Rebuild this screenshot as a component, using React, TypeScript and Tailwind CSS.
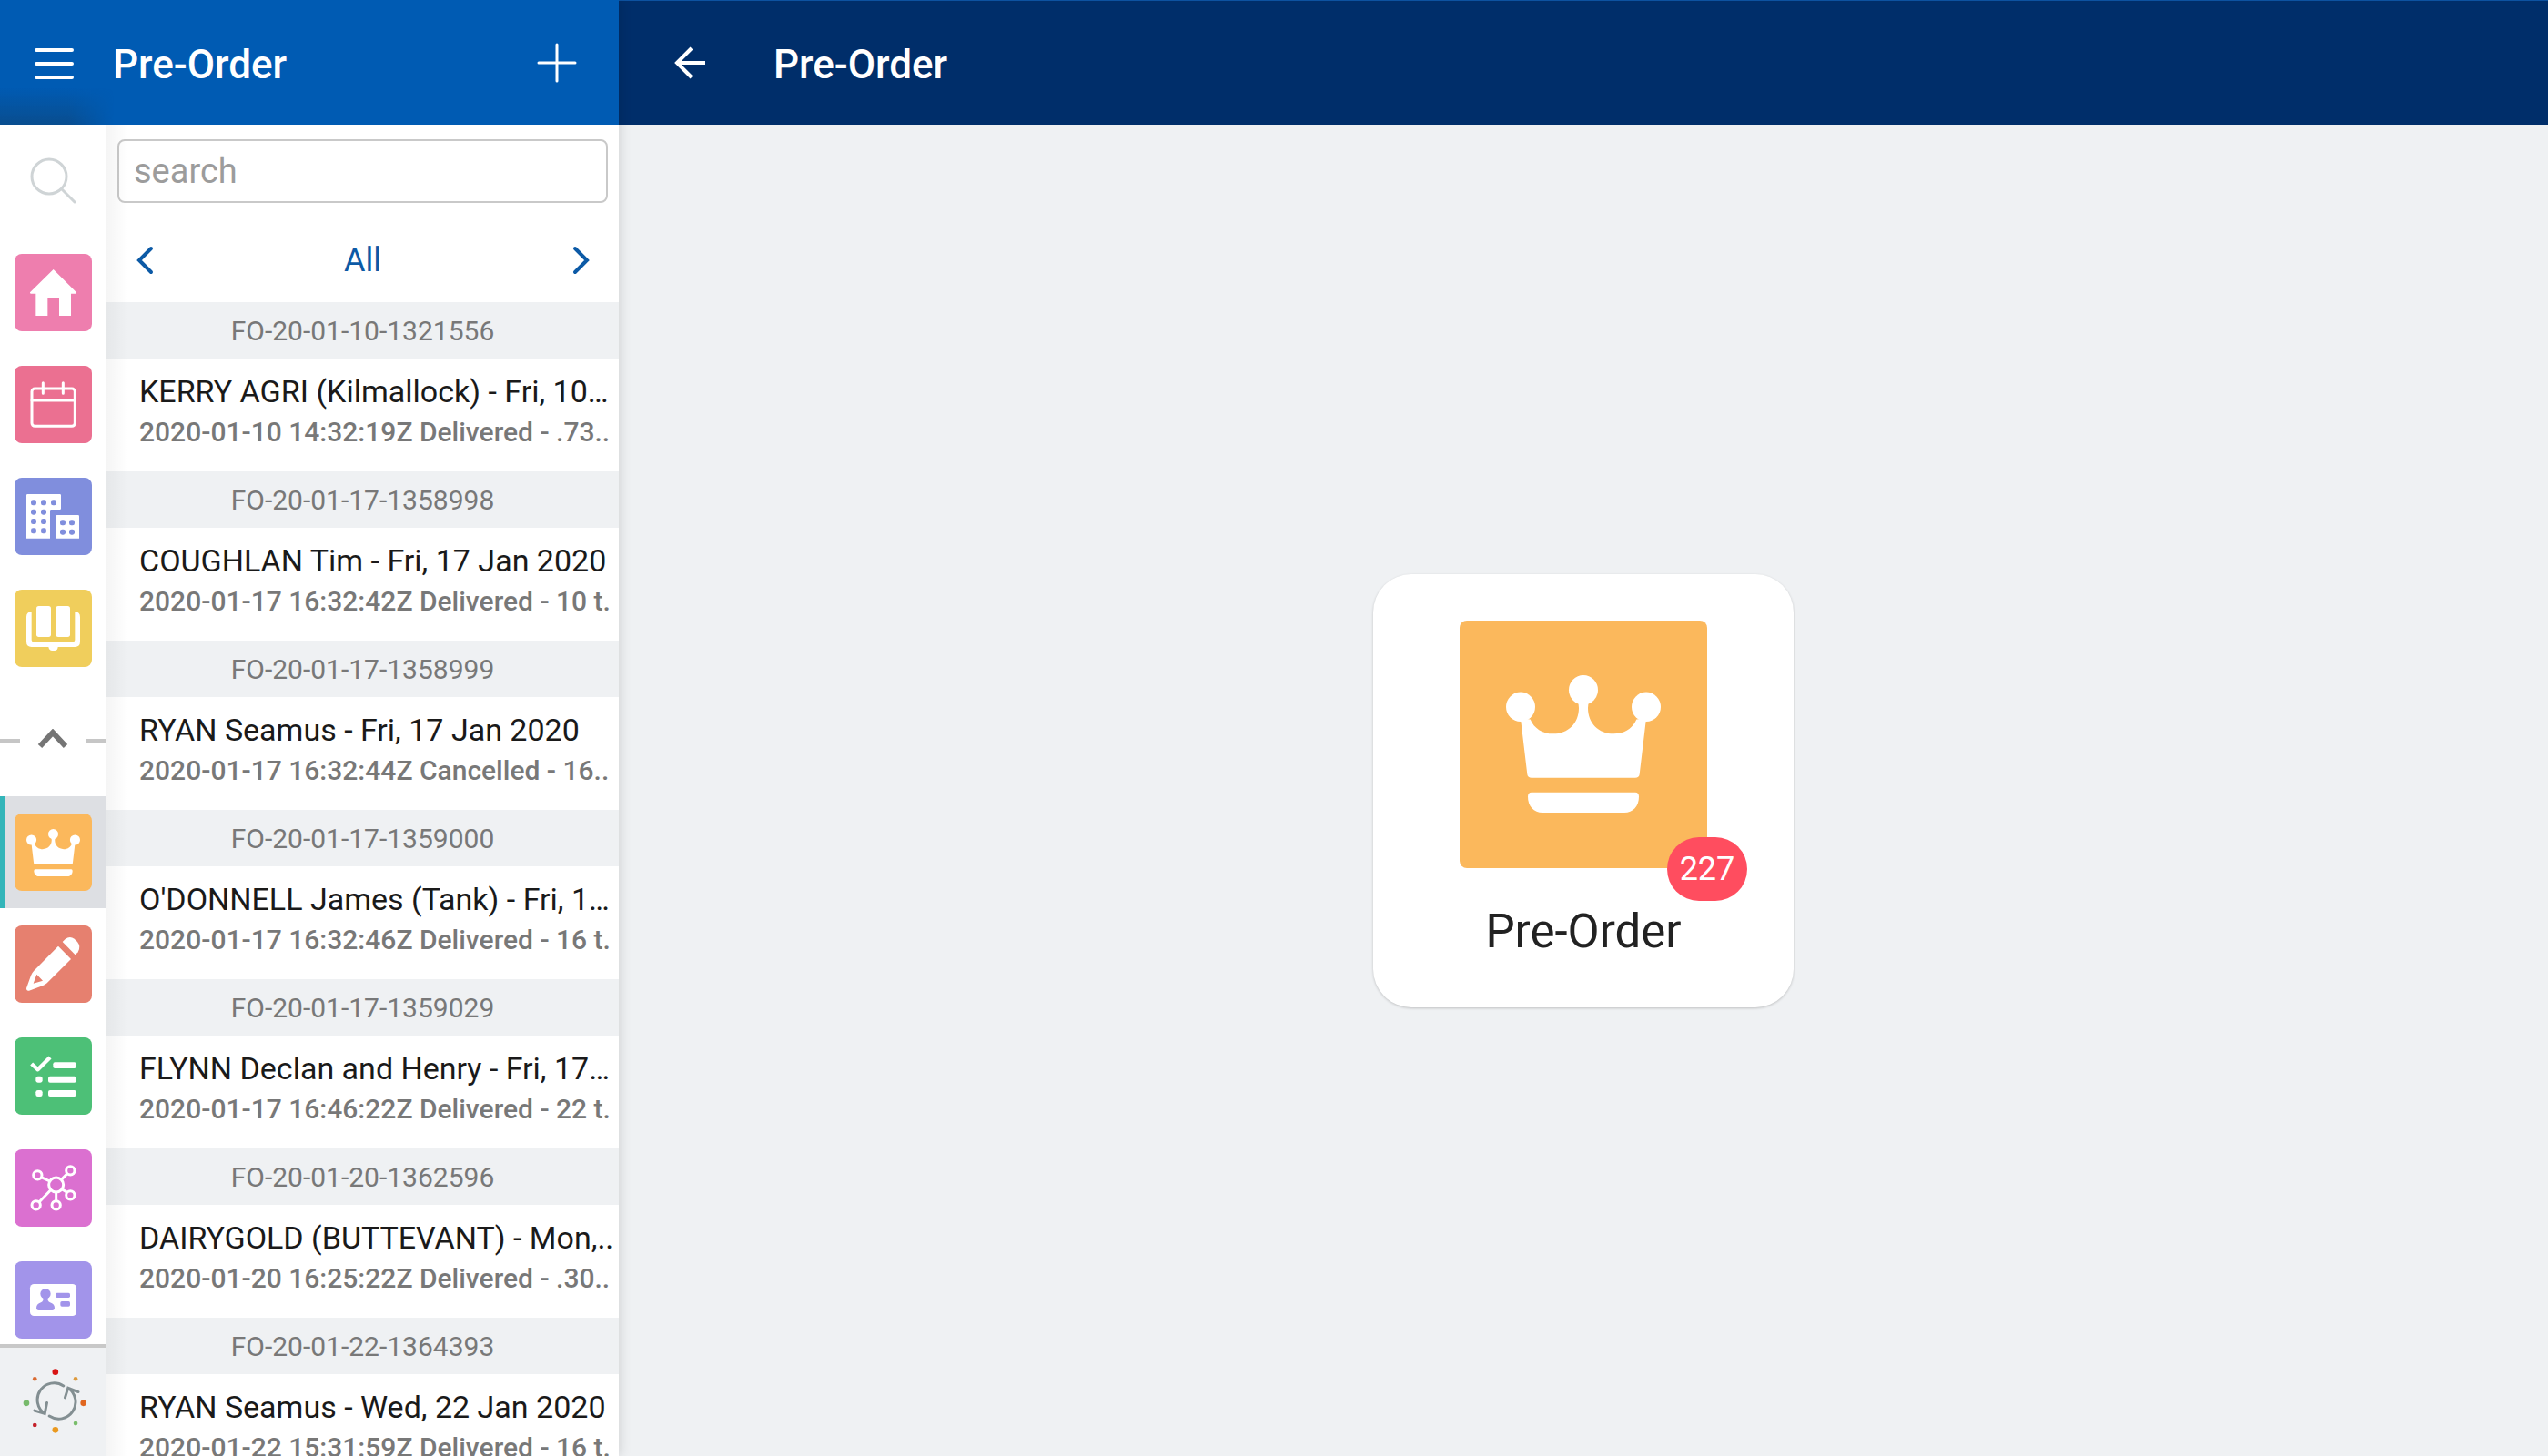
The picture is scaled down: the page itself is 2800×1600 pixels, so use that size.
import type { ReactNode } from "react";

type Order = { ref: string; title: string; detail: string };

const orders: Order[] = [
  { ref: "FO-20-01-10-1321556", title: "KERRY AGRI (Kilmallock) - Fri, 10…", detail: "2020-01-10 14:32:19Z Delivered - .73.." },
  { ref: "FO-20-01-17-1358998", title: "COUGHLAN Tim - Fri, 17 Jan 2020", detail: "2020-01-17 16:32:42Z Delivered - 10 t." },
  { ref: "FO-20-01-17-1358999", title: "RYAN Seamus - Fri, 17 Jan 2020", detail: "2020-01-17 16:32:44Z Cancelled - 16.." },
  { ref: "FO-20-01-17-1359000", title: "O'DONNELL James (Tank) - Fri, 1…", detail: "2020-01-17 16:32:46Z Delivered - 16 t." },
  { ref: "FO-20-01-17-1359029", title: "FLYNN Declan and Henry - Fri, 17…", detail: "2020-01-17 16:46:22Z Delivered - 22 t." },
  { ref: "FO-20-01-20-1362596", title: "DAIRYGOLD (BUTTEVANT) - Mon,..", detail: "2020-01-20 16:25:22Z Delivered - .30.." },
  { ref: "FO-20-01-22-1364393", title: "RYAN Seamus - Wed, 22 Jan 2020", detail: "2020-01-22 15:31:59Z Delivered - 16 t." },
];

function Crown({ className }: { className: string }) {
  return (
    <svg viewBox="0 0 510 446" preserveAspectRatio="none" className={className} fill="#fff" aria-hidden="true">
      <circle cx="48" cy="103" r="48" />
      <circle cx="255" cy="48" r="48" />
      <circle cx="462" cy="103" r="48" />
      <path d="M48 140 L70 322 Q72 333 84 333 H426 Q438 333 440 322 L462 140 L430 143 C418 172 390 190 355 190 C305 190 270 155 270 106 L272 85 H238 L240 106 C240 155 205 190 155 190 C120 190 92 172 80 143 Z" />
      <path d="M84 380 H426 Q438 380 438 394 C438 425 418 446 390 446 H120 C92 446 72 425 72 394 Q72 380 84 380 Z" />
    </svg>
  );
}

function Glyph({ children }: { children: ReactNode }) {
  return (
    <svg viewBox="0 0 255 255" className="size-full" fill="#fff" aria-hidden="true">
      {children}
    </svg>
  );
}

function NavItem({ label, tile, selected, children }: { label: string; tile: string; selected?: boolean; children: ReactNode }) {
  return (
    <button
      type="button"
      aria-label={label}
      className={`flex h-[123px] w-full shrink-0 items-center justify-center ${selected ? "border-l-6 border-[#33b5b9] bg-[#dddfe3] pr-[6px]" : ""}`}
    >
      <span className={`flex size-[85px] items-center justify-center rounded-lg ${tile}`}>{children}</span>
    </button>
  );
}

function Rail() {
  return (
    <nav aria-label="Modules" className="flex w-[117px] shrink-0 flex-col bg-white">
      <div className="flex min-h-0 flex-1 flex-col overflow-hidden">
        <button type="button" aria-label="Search" className="flex h-[123px] shrink-0 items-center justify-center">
          <svg viewBox="0 0 52 52" className="size-[52px]" fill="none" stroke="#cfd4d6" strokeWidth="3" strokeLinecap="round">
            <circle cx="21" cy="21" r="19" />
            <path d="M35 35 L49 49" />
          </svg>
        </button>
        <NavItem label="Home" tile="bg-[#ee7eae]">
          <Glyph>
            <path d="M128 51 L204 127 Q205 131 202 131 H186 V204 H147 V147 H109 V204 H70 V131 H54 Q50 131 51 127 Z" />
          </Glyph>
        </NavItem>
        <NavItem label="Calendar" tile="bg-[#eb7091]">
          <Glyph>
            <g fill="none" stroke="#fff" strokeWidth="9" strokeLinecap="round">
              <rect x="57" y="75" width="142" height="124" rx="10" />
              <path d="M57 114 H199 M94 56 V91 M160 56 V91" />
            </g>
          </Glyph>
        </NavItem>
        <NavItem label="Companies" tile="bg-[#808edd]">
          <Glyph>
            <path d="M43 54 H149 Q153 54 153 58 V101 Q153 105 149 105 H121 Q117 105 117 109 V200 H39 V58 Q39 54 43 54 Z" />
            <path d="M140 123 H209 Q213 123 213 127 V200 H136 V127 Q136 123 140 123 Z" />
            <g fill="#808edd">
              {[82, 113, 144, 175].map((y) => (
                <g key={y}>
                  <rect x="54" y={y - 9} width="18" height="18" rx="7" />
                  <rect x="87" y={y - 9} width="18" height="18" rx="7" />
                </g>
              ))}
              <rect x="120" y="73" width="18" height="18" rx="7" />
              <rect x="150" y="139" width="18" height="18" rx="7" />
              <rect x="180" y="139" width="18" height="18" rx="7" />
              <rect x="150" y="170" width="18" height="18" rx="7" />
              <rect x="180" y="170" width="18" height="18" rx="7" />
            </g>
          </Glyph>
        </NavItem>
        <NavItem label="Catalogue" tile="bg-[#f0ce5c]">
          <Glyph>
            <rect x="72" y="54" width="48" height="102" rx="8" />
            <rect x="136" y="54" width="47" height="102" rx="8" />
            <path d="M56 72 Q39 74 39 90 V172 Q39 189 56 189 H112 Q114 201 124 201 H132 Q142 201 143 189 H199 Q216 189 216 172 V90 Q216 74 199 72 V164 Q199 172 191 172 H64 Q56 172 56 164 Z" />
          </Glyph>
        </NavItem>
        <button type="button" aria-label="Collapse" className="flex h-[123px] shrink-0 items-center justify-between">
          <span className="h-1 w-[22px] bg-[#c6c6c6]" />
          <svg viewBox="0 0 34 26" className="h-[26px] w-[34px]" fill="none" stroke="#757575" strokeWidth="6">
            <path d="M3 19 L17 4 L31 19" />
          </svg>
          <span className="h-1 w-[23px] bg-[#c6c6c6]" />
        </button>
        <NavItem label="Pre-Order" tile="bg-[#fbb85c]" selected>
          <Crown className="h-[52px] w-[59px]" />
        </NavItem>
        <NavItem label="Notes" tile="bg-[#e6806f]">
          <Glyph>
            <path
              fillRule="evenodd"
              d="M144 68 L186 111 L107 190 Q100 196 92 199 L48 215 Q39 217 39 207 L54 165 Q57 156 64 149 Z M73 161 L62 191 L93 182 Z"
            />
            <path d="M158 54 L167 45 Q182 34 197 44 L207 54 Q220 70 209 88 L200 97 Z" />
          </Glyph>
        </NavItem>
        <NavItem label="Tasks" tile="bg-[#4dc077]">
          <Glyph>
            <path d="M56 87 L77 106 L117 66" fill="none" stroke="#fff" strokeWidth="13" strokeLinejoin="round" />
            <rect x="127" y="82" width="76" height="20" rx="6" />
            <rect x="111" y="128" width="92" height="21" rx="6" />
            <rect x="70" y="128" width="22" height="21" rx="7" />
            <rect x="111" y="174" width="92" height="21" rx="6" />
            <rect x="70" y="174" width="22" height="21" rx="7" />
          </Glyph>
        </NavItem>
        <NavItem label="Network" tile="bg-[#db70d0]">
          <Glyph>
            <g fill="none" stroke="#fff" strokeWidth="9">
              <circle cx="137" cy="117" r="24" />
              <circle cx="76" cy="85" r="14" />
              <circle cx="184" cy="70" r="14" />
              <circle cx="184" cy="151" r="14" />
              <circle cx="137" cy="184" r="14" />
              <circle cx="71" cy="184" r="14" />
              <path d="M88 92 L116 105 M174 80 L154 100 M173 142 L156 131 M137 141 V170 M81 174 L119 134" />
            </g>
          </Glyph>
        </NavItem>
        <NavItem label="Contacts" tile="bg-[#a294ea]">
          <Glyph>
            <rect x="51" y="75" width="153" height="105" rx="13" />
            <g fill="#a294ea">
              <circle cx="102" cy="107" r="17" />
              <path d="M95 120 H109 Q108 132 117 136 Q132 141 132 154 Q132 162 124 162 H80 Q72 162 72 154 Q72 141 87 136 Q96 132 95 120 Z" />
              <rect x="135" y="104" width="48" height="16" rx="5" />
              <rect x="151" y="132" width="32" height="17" rx="5" />
            </g>
          </Glyph>
        </NavItem>
      </div>
      <button type="button" aria-label="Synchronise" className="flex h-[123px] shrink-0 items-center justify-center border-t-4 border-[#c8c8c8] bg-[#eff1f3]">
        <svg viewBox="66 787 220 230" className="h-[77px] w-[73px]">
          <circle cx="183" cy="803" r="10" fill="#d81414" />
          <circle cx="250" cy="826" r="7" fill="#dd9a3c" />
          <circle cx="276" cy="906" r="10" fill="#e0661f" />
          <circle cx="250" cy="973" r="7" fill="#78bd6a" />
          <circle cx="183" cy="995" r="10" fill="#ea991f" />
          <circle cx="115" cy="979" r="7" fill="#c4212a" />
          <circle cx="87" cy="906" r="10" fill="#77ba6b" />
          <circle cx="115" cy="826" r="7" fill="#d9692f" />
          <g fill="none" stroke="#838f92" strokeWidth="9" strokeLinecap="round">
            <path d="M210 849 A55 55 0 0 0 148 941 M114 931 L148 941 L155 905" />
            <path d="M163 949 A55 55 0 0 0 225 856 M215 888 L225 856 L259 869" />
          </g>
        </svg>
      </button>
    </nav>
  );
}

function OrderList() {
  return (
    <section aria-label="Orders" className="flex min-w-0 flex-1 flex-col overflow-hidden bg-white">
      <div className="px-3 pt-4">
        <input
          type="text"
          aria-label="search"
          placeholder="search"
          className="block h-[70px] w-full rounded-lg border-2 border-[#c9c9c9] bg-white px-4 text-[38px] text-[#222] outline-none placeholder:text-[#9c9c9c]"
        />
      </div>
      <div className="flex h-[109px] shrink-0 items-center justify-between px-8 pt-4 text-[#0c5aa6]">
        <button type="button" aria-label="Previous filter">
          <svg viewBox="0 0 20 32" className="h-8 w-5" fill="none" stroke="currentColor" strokeWidth="4" strokeLinecap="round">
            <path d="M17 3 L4 16 L17 29" />
          </svg>
        </button>
        <span className="text-4xl">All</span>
        <button type="button" aria-label="Next filter">
          <svg viewBox="0 0 20 32" className="h-8 w-5" fill="none" stroke="currentColor" strokeWidth="4" strokeLinecap="round">
            <path d="M4 3 L17 16 L4 29" />
          </svg>
        </button>
      </div>
      <ul>
        {orders.map((o) => (
          <li key={o.ref}>
            <h2 className="flex h-[62px] items-center justify-center bg-[#eff1f3] text-[30px] text-[#787878]">{o.ref}</h2>
            <div className="h-[124px] overflow-hidden pt-[14px] pr-[6px] pl-9 whitespace-nowrap">
              <p className="overflow-hidden text-[34px] leading-[44px] text-[#1a1a1a]">{o.title}</p>
              <p className="overflow-hidden text-[30px] leading-[46px] font-medium text-[#787878]">{o.detail}</p>
            </div>
          </li>
        ))}
      </ul>
    </section>
  );
}

export default function App() {
  return (
    <div className="flex h-screen overflow-hidden bg-[#eff1f3] font-[Roboto,sans-serif]">
      <aside className="relative z-10 flex w-[680px] shrink-0 flex-col shadow-[2px_0_12px_rgba(0,0,0,0.12)]">
        <header className="relative flex h-[137px] shrink-0 items-center bg-[#005bb3] pr-[46px] pl-[36px] text-white">
          <div className="absolute bottom-0 left-0 h-10 w-[125px] bg-linear-to-b from-transparent to-[#0b4a86]/80 mask-r-from-60%" />
          <button type="button" aria-label="Menu" className="relative mr-[42px]">
            <svg viewBox="0 0 46 36" className="h-9 w-[46px]" stroke="currentColor" strokeWidth="4" strokeLinecap="round">
              <path d="M4 4 H43 M4 19 H43 M4 34 H43" />
            </svg>
          </button>
          <h1 className="flex-1 pt-1 text-[44px] leading-12 font-medium">Pre-Order</h1>
          <button type="button" aria-label="Add order">
            <svg viewBox="0 0 44 44" className="size-11" stroke="currentColor" strokeWidth="3" strokeLinecap="round">
              <path d="M22 2 V42 M2 22 H42" />
            </svg>
          </button>
        </header>
        <div className="flex min-h-0 flex-1">
          <Rail />
          <div className="relative flex min-w-0 flex-1">
            <OrderList />
            <div className="pointer-events-none absolute inset-y-0 left-0 w-6 bg-linear-to-r from-black/4 to-transparent" />
          </div>
        </div>
      </aside>
      <div className="flex min-w-0 flex-1 flex-col">
        <header className="flex h-[137px] shrink-0 items-center border-t border-[#0d52a0] bg-[#002e6a] px-[60px] text-white">
          <button type="button" aria-label="Back" className="mr-[74px]">
            <svg viewBox="0 0 36 36" className="size-9" fill="none" stroke="currentColor" strokeWidth="4">
              <path d="M20 2 L4 18 L20 34 M4 18 H35" />
            </svg>
          </button>
          <h1 className="pt-1 text-[44px] leading-12 font-medium">Pre-Order</h1>
        </header>
        <main className="flex flex-1 items-center justify-center">
          <button type="button" className="flex w-[462px] flex-col items-center rounded-[42px] bg-white pt-[51px] pb-[50px] shadow-[0_1px_3px_rgba(0,0,0,0.2)]">
            <span className="relative flex size-[272px] items-center justify-center rounded-lg bg-[#fbb85c]">
              <Crown className="h-[151px] w-[170px]" />
              <span className="absolute -right-11 -bottom-9 flex h-[70px] w-[88px] items-center justify-center rounded-full bg-[#ff4d5f] text-4xl text-white">
                227
              </span>
            </span>
            <span className="mt-9 text-[51px] leading-[67px] text-[#222]">Pre-Order</span>
          </button>
        </main>
      </div>
    </div>
  );
}
